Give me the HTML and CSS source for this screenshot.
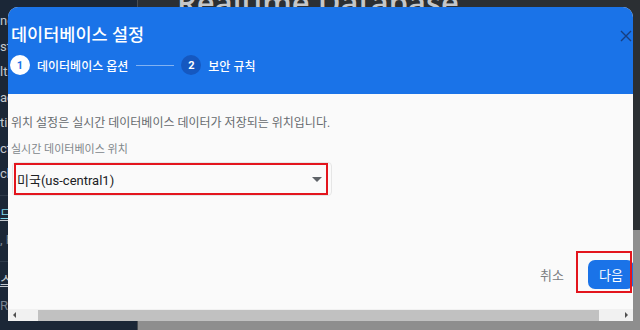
FILE: index.html
```html
<!DOCTYPE html>
<html lang="ko">
<head>
    <meta charset="UTF-8">
    <title>데이터베이스 설정</title>
    <link rel="stylesheet" href="styles.css">
</head>
<body>

    <!-- Page behind the dialog -->
    <div class="page">
        <nav class="sidebar">
            <div class="nav-item">ne</div>
            <div class="nav-item">st</div>
            <div class="nav-item">lti</div>
            <div class="nav-item">ac</div>
            <div class="nav-item">ti</div>
            <div class="nav-item">ct</div>
            <div class="nav-item">ch</div>
            <div class="nav-sep"></div>
            <div class="nav-item nav-link">므</div>
            <div class="nav-item nav-sub">, F</div>
            <div class="nav-sep"></div>
            <div class="nav-item nav-under">스</div>
            <div class="nav-item nav-sub">R</div>
        </nav>
        <main class="main">
            <div class="main-head">
                <span class="main-title">Realtime Database</span>
            </div>
            <div class="main-body"></div>
        </main>
    </div>

    <!-- Dialog -->
    <div class="dialog">
        <header class="dialog-head">
            <h1 class="dialog-title">데이터베이스 설정</h1>
            <div class="steps">
                <span class="step-num active">1</span>
                <span class="step-label">데이터베이스 옵션</span>
                <span class="step-line"></span>
                <span class="step-num">2</span>
                <span class="step-label">보안 규칙</span>
            </div>
            <svg class="close" width="12" height="12" viewBox="0 0 12 12">
                <path d="M1 1L11 11M11 1L1 11" stroke="currentColor" stroke-width="1.4" fill="none"/>
            </svg>
        </header>

        <section class="dialog-body">
            <p class="desc">위치 설정은 실시간 데이터베이스 데이터가 저장되는 위치입니다.</p>
            <label class="field-label">실시간 데이터베이스 위치</label>
            <div class="field">
                <div class="select">
                    <span>미국(us-central1)</span>
                    <span class="arrow"></span>
                </div>
            </div>
        </section>

        <footer class="dialog-foot">
            <button class="btn-text">취소</button>
            <button class="btn-primary">다음</button>
        </footer>

        <div class="scrollbar">
            <span class="sb-arrow left"></span>
            <span class="sb-thumb"></span>
            <span class="sb-arrow right"></span>
        </div>

        <!-- red annotation boxes -->
        <div class="mark mark-select"></div>
        <div class="mark mark-next"></div>
    </div>

</body>
</html>
```

FILE: styles.css
```css
/* General */
* {
    box-sizing: border-box;
}
body {
    margin: 0;
    width: 640px;
    height: 330px;
    overflow: hidden;
    font-family: Roboto, "Noto Sans CJK KR", sans-serif;
    background: #8f8f8f;
}

/* Background page */
.page {
    display: grid;
    grid-template-columns: 137px 1fr;
    height: 330px;
}
.sidebar {
    background: #1b2737;
    padding-top: 12px;
    overflow: hidden;
}
.nav-item {
    width: 8px;
    overflow: hidden;
    color: #c3c8ce;
    font-size: 13px;
    height: 25.5px;
    line-height: 17px;
    white-space: nowrap;
}
.nav-link {
    color: #7fd3e6;
    text-decoration: underline;
    text-decoration-color: #c3c8ce;
}
.nav-under {
    text-decoration: underline;
}
.nav-sub {
    color: #7b8490;
}
.nav-sep {
    height: 1px;
    background: #2f3b4a;
    margin: 4px 0 10px;
}
.main {
    display: flex;
    flex-direction: column;
    border-left: 1px solid #4a4e52;
}
.main-head {
    background: #2b2f33;
    height: 230px;
    padding-left: 39px;
    overflow: hidden;
}
.main-title {
    display: block;
    margin-top: -13px;
    font-family: "Open Sans", sans-serif;
    font-weight: 600;
    font-size: 31px;
    line-height: 30px;
    color: #c4c6c8;
}
.main-body {
    flex: 1;
    background: #8e8e8e;
}

/* Dialog */
.dialog {
    position: absolute;
    left: 8px;
    top: 7px;
    width: 625px;
    height: 314px;
    background: #fafafa;
    border-radius: 10px 10px 0 0;
    overflow: hidden;
    display: flex;
    flex-direction: column;
}
.dialog-head {
    position: relative;
    background: #1a73e8;
    height: 87px;
    padding: 16px 0 0 3px;
    color: white;
}
.dialog-title {
    margin: 0;
    font-size: 17.5px;
    font-weight: 500;
    line-height: 25px;
}
.steps {
    display: flex;
    align-items: center;
    margin-top: 7px;
    margin-left: -1px;
}
.step-num {
    width: 20px;
    height: 20px;
    border-radius: 50%;
    background: #1558c0;
    color: white;
    font-size: 11px;
    font-weight: 700;
    display: flex;
    align-items: center;
    justify-content: center;
}
.step-num.active {
    background: white;
    color: #1a73e8;
}
.step-label {
    font-size: 12px;
    font-weight: 500;
    margin-left: 7px;
}
.step-line {
    width: 38px;
    height: 1px;
    background: rgba(255, 255, 255, 0.45);
    margin: 0 7px 0 8px;
}
.close {
    position: absolute;
    top: 23px;
    right: 1px;
    color: #173f80;
}

.dialog-body {
    flex: 1;
    padding: 21px 0 0 3px;
}
.desc {
    margin: 0;
    font-size: 12px;
    line-height: 16px;
    color: #666a6e;
}
.field-label {
    display: block;
    margin-top: 12px;
    font-size: 11px;
    line-height: 14px;
    color: #80868b;
}
.field {
    width: 320px;
    margin-top: 5px;
    margin-left: 1px;
    border: 1px solid #e6e6e6;
    border-radius: 4px;
    height: 34px;
    padding: 1px 0 0 2px;
}
.select {
    height: 30px;
    display: flex;
    align-items: center;
    justify-content: space-between;
    padding: 0 9px 0 2px;
    font-size: 13px;
    color: #202124;
}
.arrow {
    width: 0;
    height: 0;
    border-left: 5px solid transparent;
    border-right: 5px solid transparent;
    border-top: 5px solid #5f6368;
}

.dialog-foot {
    display: flex;
    justify-content: flex-end;
    align-items: center;
    gap: 24px;
    padding-bottom: 20px;
    margin-right: -1px;
}
.btn-text,
.btn-primary {
    font-family: inherit;
    font-size: 13px;
    border: none;
    cursor: pointer;
}
.btn-text {
    background: none;
    color: #7a7d80;
    padding: 0;
}
.btn-primary {
    background: #1a73e8;
    color: white;
    width: 46px;
    height: 29px;
    border-radius: 7px;
    padding: 0;
}

/* Horizontal scrollbar */
.scrollbar {
    display: flex;
    align-items: center;
    height: 12px;
    background: #f1f1f1;
}
.sb-arrow {
    width: 0;
    height: 0;
    border-top: 3px solid transparent;
    border-bottom: 3px solid transparent;
}
.sb-arrow.left {
    border-right: 3px solid #505050;
    margin: 0 22px 0 5px;
}
.sb-arrow.right {
    border-left: 3px solid #505050;
    margin: 0 5px 0 auto;
}
.sb-thumb {
    width: 561px;
    height: 11px;
    background: #c1c1c1;
}

/* Red annotation boxes */
.mark {
    position: absolute;
    border: 2px solid #e3151d;
}
.mark-select {
    left: 6px;
    top: 156px;
    width: 314px;
    height: 32px;
}
.mark-next {
    left: 568px;
    top: 244px;
    width: 56px;
    height: 42px;
}
```
